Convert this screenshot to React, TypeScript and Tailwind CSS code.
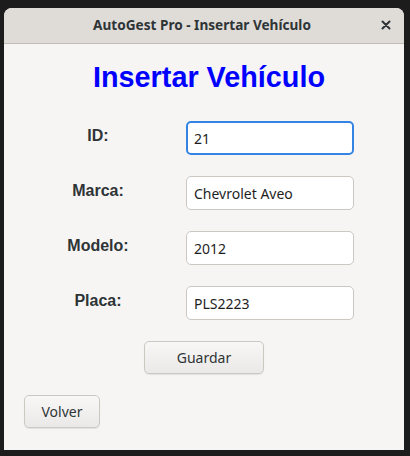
import React from "react";

const fields = [
  { label: "ID:", value: "21", focused: true },
  { label: "Marca:", value: "Chevrolet Aveo" },
  { label: "Modelo:", value: "2012" },
  { label: "Placa:", value: "PLS2223" },
];

export default function App() {
  return (
    <div className="w-[410px] h-[456px] bg-[#1c1c1c] pt-[8px] pl-[4px] overflow-hidden">
      <div className="w-[400px] h-[442px] bg-[#f6f5f4] rounded-t-[8px] flex flex-col overflow-hidden">
        <div className="h-[36px] shrink-0 bg-[#dfdcd8] border-b border-[#c0bbb5] flex items-center relative">
          <div className="w-full text-center text-[13.6px] font-bold text-[#2e3436] pr-[4px] [font-family:'Noto_Sans',sans-serif]">
            AutoGest Pro - Insertar Vehículo
          </div>
          <svg className="absolute left-[377px] top-[12px]" width="10" height="10" viewBox="0 0 10 10">
            <path d="M1.5 1.5 L8.5 8.5 M8.5 1.5 L1.5 8.5" stroke="#2e3436" strokeWidth="2" strokeLinecap="round" />
          </svg>
        </div>
        <div className="flex flex-col">
          <h1 className="mt-[14px] pl-[10px] text-center text-[28.8px] leading-[38px] font-bold text-[#0000ff] [font-family:'Liberation_Sans',Arial,sans-serif]">
            Insertar Vehículo
          </h1>
          <div className="mt-[25px] flex flex-col gap-[21px]">
            {fields.map((f) => (
              <div key={f.label} className="flex items-center h-[34px]">
                <div className="w-[188px] text-center text-[16px] font-bold text-[#2e3436] -mt-[4px] [font-family:'Liberation_Sans',Arial,sans-serif]">
                  {f.label}
                </div>
                <div
                  className={
                    f.focused
                      ? "ml-[-6px] w-[168px] h-[34px] bg-white rounded-[5px] border-2 border-[#3584e4] flex items-center pl-[6px] text-[14px] text-[#1e1e1e] [font-family:'Noto_Sans',sans-serif]"
                      : "ml-[-6px] w-[168px] h-[34px] bg-white rounded-[5px] border border-[#cdc7c2] flex items-center pl-[7px] text-[14px] text-[#1e1e1e] [font-family:'Noto_Sans',sans-serif]"
                  }
                >
                  {f.value}
                </div>
              </div>
            ))}
          </div>
          <div className="mt-[21px] flex justify-center">
            <div className="w-[120px] h-[33px] rounded-[5px] border border-[#cdc7c2] bg-gradient-to-b from-[#f8f7f6] to-[#ebe9e7] shadow-[0_1px_1px_rgba(0,0,0,0.08)] flex items-center justify-center text-[14px] text-[#2e3436] [font-family:'Noto_Sans',sans-serif]">
              Guardar
            </div>
          </div>
          <div className="mt-[21px] pl-[20px]">
            <div className="w-[76px] h-[33px] rounded-[5px] border border-[#cdc7c2] bg-gradient-to-b from-[#f8f7f6] to-[#ebe9e7] shadow-[0_1px_1px_rgba(0,0,0,0.08)] flex items-center justify-center text-[14px] text-[#2e3436] [font-family:'Noto_Sans',sans-serif]">
              Volver
            </div>
          </div>
        </div>
      </div>
    </div>
  );
}
